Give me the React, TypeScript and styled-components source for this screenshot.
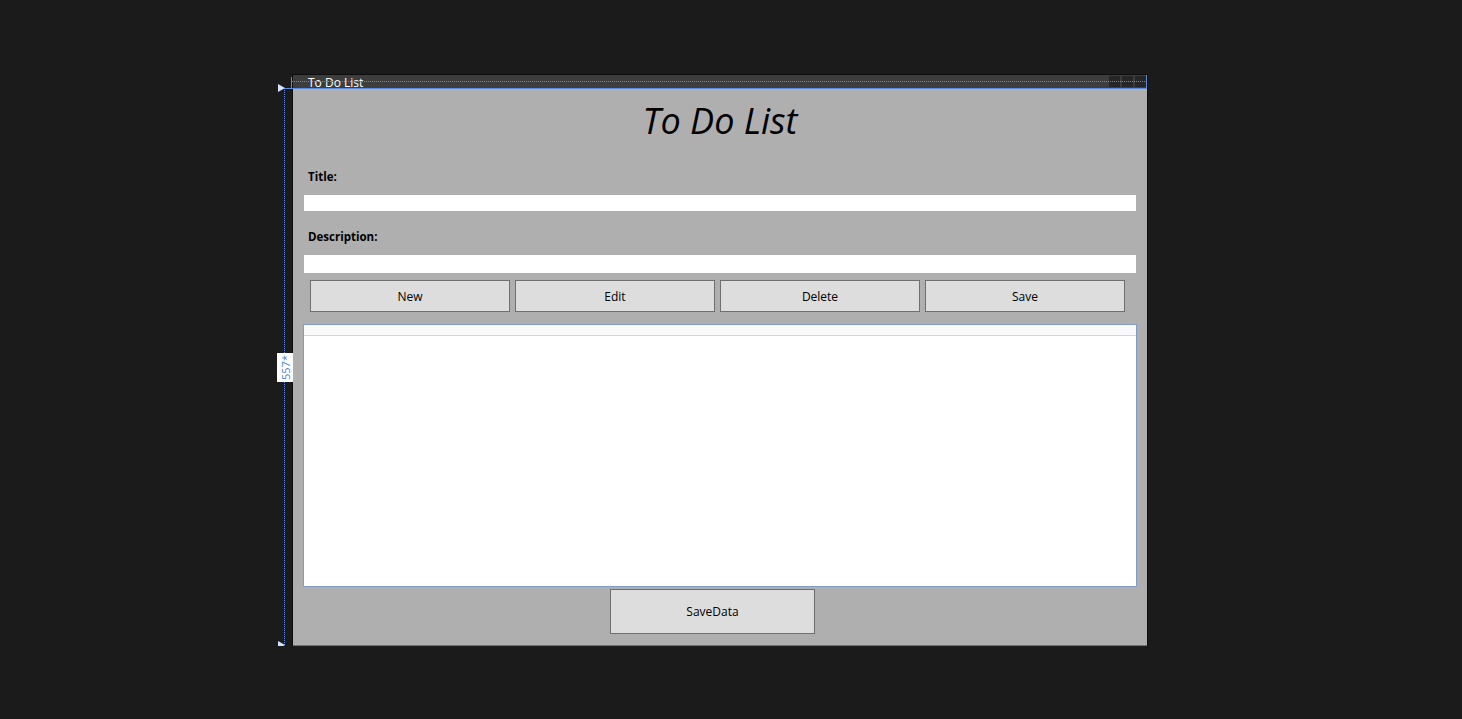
import React from "react";
import styled, { createGlobalStyle } from "styled-components";

const Global = createGlobalStyle`
  html, body { margin: 0; padding: 0; background: #1b1b1b; }
  body { font-family: "Open Sans", "Noto Sans", sans-serif; }
`;

const Stage = styled.div`
  position: relative;
  margin: 74px 0 0 292px;
  width: 856px;
`;

const Window = styled.div`
  width: 856px;
  box-sizing: border-box;
  border: 1px solid #0e0e0e;
  border-bottom: none;
`;

const TitleBar = styled.div`
  height: 13px;
  background: #3d3d3d;
  border-bottom: 1px solid #4f84d6;
  display: flex;
  align-items: center;
  padding-left: 15px;
  font-size: 12px;
  color: #ffffff;
  line-height: 13px;
`;

const TitleText = styled.span`
  flex: 1;
  position: relative;
  top: 1px;
`;

const Caption = styled.div`
  display: flex;
  gap: 2px;
  align-self: flex-start;
  margin-top: 1px;
  margin-right: 1px;
`;

const CaptionBox = styled.div`
  width: 11px;
  height: 11px;
  background: #262626;
`;

const Client = styled.div`
  height: 556px;
  background: #afafaf;
  border-bottom: 1px solid #4a78c0;
  display: flex;
  flex-direction: column;
  align-items: flex-start;
`;

const Heading = styled.h1`
  margin: 8px 0 0 0;
  width: 100%;
  height: 48px;
  line-height: 48px;
  text-align: center;
  font-size: 36px;
  font-weight: 400;
  font-style: italic;
  color: #000;
  box-sizing: border-box;
`;

const Label = styled.div<{ $top: number }>`
  margin: ${(p) => p.$top}px 0 0 15px;
  height: 16px;
  line-height: 16px;
  font-size: 11.5px;
  font-weight: 700;
  color: #000;
`;

const Input = styled.div<{ $top: number; $h: number }>`
  margin: ${(p) => p.$top}px 0 0 11px;
  width: 832px;
  height: ${(p) => p.$h}px;
  background: #fff;
`;

const ButtonRow = styled.div`
  margin: 7px 0 0 17px;
  display: flex;
  gap: 5px;
`;

const Button = styled.div<{ $w: number; $h: number }>`
  width: ${(p) => p.$w}px;
  height: ${(p) => p.$h}px;
  box-sizing: border-box;
  border: 1px solid #6f6f6f;
  background: #dddddd;
  display: flex;
  align-items: center;
  justify-content: center;
  font-size: 12px;
  color: #000;
`;

const ListView = styled.div`
  margin: 12px 0 0 10px;
  width: 834px;
  height: 263px;
  box-sizing: border-box;
  border: 1px solid #7f9ccb;
  background: #fff;
  display: flex;
  flex-direction: column;
`;

const ListHeader = styled.div`
  height: 10px;
  background: #fafafa;
  border-bottom: 1px solid #d6d6d6;
`;

const SaveWrap = styled.div`
  margin: 2px 0 0 317px;
`;

const HLine = styled.div<{ $top: number; $left: number; $w: number; $dotted?: boolean }>`
  position: absolute;
  top: ${(p) => p.$top}px;
  left: ${(p) => p.$left}px;
  width: ${(p) => p.$w}px;
  height: 0;
  border-top: 1px ${(p) => (p.$dotted ? "dotted" : "solid")} #5b8fde;
`;

const VLine = styled.div<{ $top: number; $left: number; $h: number; $dotted?: boolean }>`
  position: absolute;
  top: ${(p) => p.$top}px;
  left: ${(p) => p.$left}px;
  height: ${(p) => p.$h}px;
  width: 0;
  border-left: 1px ${(p) => (p.$dotted ? "dotted" : "solid")} #5b8fde;
`;

const Arrow = styled.div<{ $top: number }>`
  position: absolute;
  top: ${(p) => p.$top}px;
  left: -14px;
  width: 0;
  height: 0;
  border-top: 4px solid transparent;
  border-bottom: 4px solid transparent;
  border-left: 7px solid #d2e2ff;
`;

const SizeTag = styled.div`
  position: absolute;
  top: 279px;
  left: -15px;
  width: 16px;
  height: 29px;
  background: #fff;
  display: flex;
  align-items: center;
  justify-content: center;
`;

const SizeText = styled.span`
  display: inline-block;
  transform: rotate(-90deg);
  font-size: 11px;
  color: #4a7fd0;
  white-space: nowrap;
  font-family: "Open Sans", sans-serif;
`;

export default function App() {
  return (
    <>
      <Global />
      <Stage>
        <Window>
          <TitleBar>
            <TitleText>To Do List</TitleText>
            <Caption>
              <CaptionBox />
              <CaptionBox />
              <CaptionBox />
            </Caption>
          </TitleBar>
          <Client>
            <Heading>To Do List</Heading>
            <Label $top={24}>Title:</Label>
            <Input $top={10} $h={16} />
            <Label $top={18}>Description:</Label>
            <Input $top={10} $h={18} />
            <ButtonRow>
              <Button $w={200} $h={32}>New</Button>
              <Button $w={200} $h={32}>Edit</Button>
              <Button $w={200} $h={32}>Delete</Button>
              <Button $w={200} $h={32}>Save</Button>
            </ButtonRow>
            <ListView>
              <ListHeader />
            </ListView>
            <SaveWrap>
              <Button $w={205} $h={45}>SaveData</Button>
            </SaveWrap>
          </Client>
        </Window>
        <HLine $top={7} $left={0} $w={855} $dotted />
        <VLine $top={3} $left={-1} $h={11} />
        <VLine $top={1} $left={854} $h={13} />
        <HLine $top={14} $left={-9} $w={864} />
        <VLine $top={14} $left={-8} $h={563} $dotted />
        <Arrow $top={10} />
        <Arrow $top={567} />
        <HLine $top={577} $left={-12} $w={11} />
        <SizeTag>
          <SizeText>557*</SizeText>
        </SizeTag>
      </Stage>
    </>
  );
}
